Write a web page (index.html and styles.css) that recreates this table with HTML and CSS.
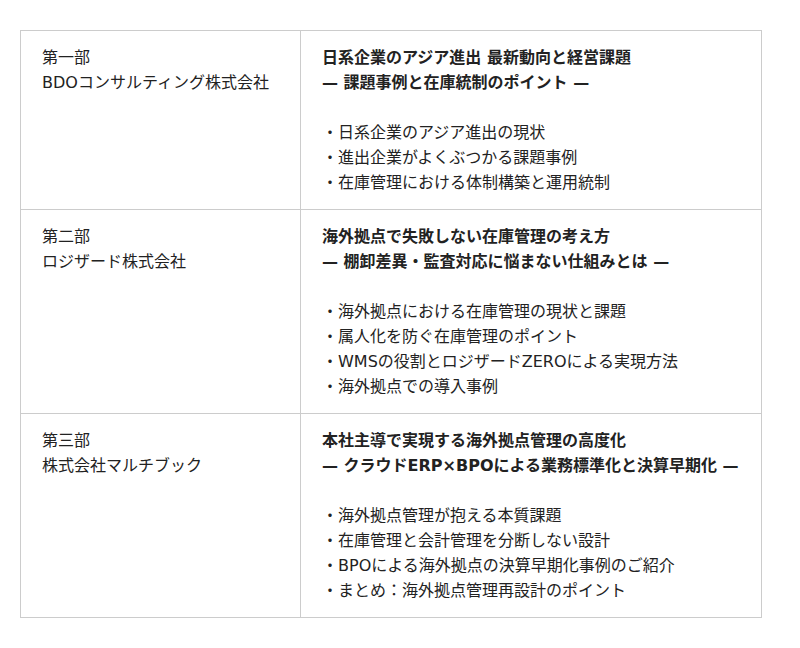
FILE: index.html
```html
<!DOCTYPE html>
<html lang="ja">
<head>
<meta charset="utf-8">
<link rel="stylesheet" href="styles.css">
</head>
<body>
<table class="program">
  <tr>
    <td class="who">第一部<br>BDOコンサルティング株式会社</td>
    <td class="what">
      <div class="title">日系企業のアジア進出 最新動向と経営課題<br>— 課題事例と在庫統制のポイント —</div>
      <div class="items">・日系企業のアジア進出の現状<br>・進出企業がよくぶつかる課題事例<br>・在庫管理における体制構築と運用統制</div>
    </td>
  </tr>
  <tr>
    <td class="who">第二部<br>ロジザード株式会社</td>
    <td class="what">
      <div class="title">海外拠点で失敗しない在庫管理の考え方<br>— 棚卸差異・監査対応に悩まない仕組みとは —</div>
      <div class="items">・海外拠点における在庫管理の現状と課題<br>・属人化を防ぐ在庫管理のポイント<br>・WMSの役割とロジザードZEROによる実現方法<br>・海外拠点での導入事例</div>
    </td>
  </tr>
  <tr>
    <td class="who">第三部<br>株式会社マルチブック</td>
    <td class="what">
      <div class="title">本社主導で実現する海外拠点管理の高度化<br>— クラウドERP×BPOによる業務標準化と決算早期化 —</div>
      <div class="items">・海外拠点管理が抱える本質課題<br>・在庫管理と会計管理を分断しない設計<br>・BPOによる海外拠点の決算早期化事例のご紹介<br>・まとめ：海外拠点管理再設計のポイント</div>
    </td>
  </tr>
</table>
</body>
</html>
```

FILE: styles.css
```css
html, body {
  margin: 0;
  padding: 0;
  background: #fff;
}
body {
  padding: 30px 20px;
  font-family: "DejaVu Sans", "Noto Sans CJK JP", sans-serif;
  font-size: 16px;
  line-height: 25px;
  color: #222;
}
.program {
  width: 742px;
  border-collapse: collapse;
  border: 1px solid #ddd;
}
.program td {
  border: 1px solid #ccc;
  vertical-align: top;
  padding: 14px 21px 14px 21px;
}
.program td.who {
  width: 237px;
}
.title {
  font-weight: bold;
  margin-bottom: 25px;
}
```
